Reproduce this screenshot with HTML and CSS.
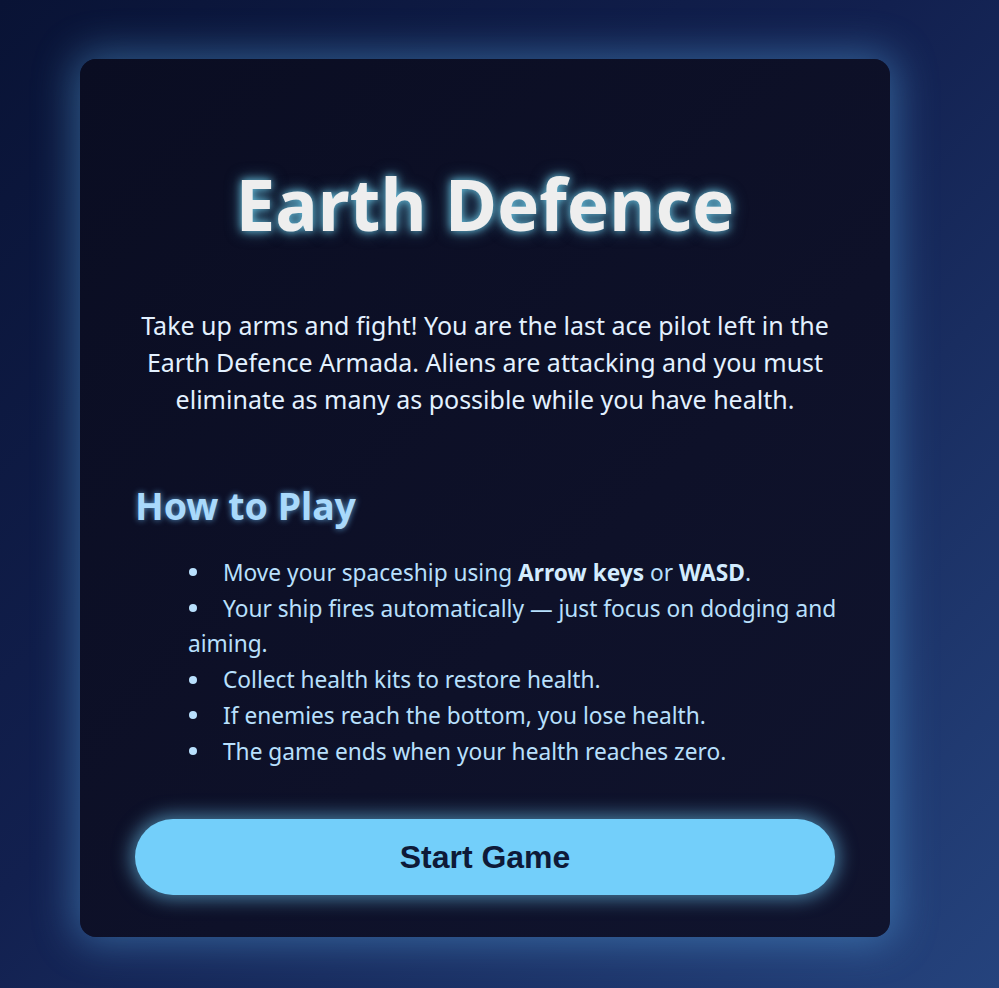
FILE: index.html
```html
<!DOCTYPE html>
<html lang="en">
<head>
<meta charset="utf-8">
<title>Earth Defence</title>
<link rel="stylesheet" href="styles.css">
</head>
<body>
<main class="card">
  <h1 class="title">Earth Defence</h1>
  <p class="intro">Take up arms and fight! You are the last ace pilot left in the Earth Defence Armada. Aliens are attacking and you must eliminate as many as possible while you have health.</p>
  <h2 class="subtitle">How to Play</h2>
  <ul class="rules">
    <li>Move your spaceship using <strong>Arrow keys</strong> or <strong>WASD</strong>.</li>
    <li>Your ship fires automatically — just focus on dodging and aiming.</li>
    <li>Collect health kits to restore health.</li>
    <li>If enemies reach the bottom, you lose health.</li>
    <li>The game ends when your health reaches zero.</li>
  </ul>
  <button class="start">Start Game</button>
</main>
</body>
</html>
```
FILE: styles.css
```css
html, body {
  margin: 0;
  height: 100%;
}
body {
  box-sizing: border-box;
  min-height: 988px;
  padding: 59px 0 0 80px;
  background: linear-gradient(135deg, #091335 0%, #12204f 45%, #25437d 100%);
  font-family: "Noto Sans", "Open Sans", sans-serif;
}
.card {
  box-sizing: border-box;
  width: 810px;
  height: 878px;
  padding: 0 55px 42px;
  border-radius: 16px;
  background: linear-gradient(135deg, #0a0d22 0%, #0e1129 60%, #10142e 100%);
  box-shadow: 0 0 40px 6px rgba(88, 170, 230, 0.45);
  display: flex;
  flex-direction: column;
}
.title {
  margin: 100px 0 0;
  font-size: 71px;
  line-height: 90px;
  font-weight: 700;
  text-align: center;
  color: #eeeeee;
  text-shadow: 0 0 8px rgba(110, 205, 235, 0.9), 0 0 16px rgba(110, 205, 235, 0.5);
}
.intro {
  margin: 58px 0 0;
  font-size: 25px;
  line-height: 37px;
  text-align: center;
  color: #e3f1ff;
}
.subtitle {
  margin: 66px 0 0;
  font-size: 37.5px;
  line-height: 44px;
  font-weight: 700;
  color: #a9d9fb;
  text-shadow: 0 0 6px rgba(110, 190, 250, 0.8);
}
.rules {
  list-style: none;
  margin: 27px -10px 0 0;
  padding: 0 0 0 53px;
  font-size: 22.7px;
  line-height: 35.7px;
  color: #b9e0fd;
}
.rules li::before {
  content: "";
  display: inline-block;
  width: 8px;
  height: 8px;
  margin: 0 26px 0 1px;
  border-radius: 50%;
  background: #b9e0fd;
  vertical-align: 0.2em;
}
.rules strong {
  color: #d3ecff;
}
.start {
  margin-top: auto;
  height: 76px;
  border: 0;
  border-radius: 38px;
  background: #73cffa;
  color: #0e1a38;
  font-family: "Liberation Sans", Arial, sans-serif;
  font-size: 32px;
  font-weight: 700;
  box-shadow: 0 0 18px 4px rgba(115, 207, 250, 0.55);
}
```
